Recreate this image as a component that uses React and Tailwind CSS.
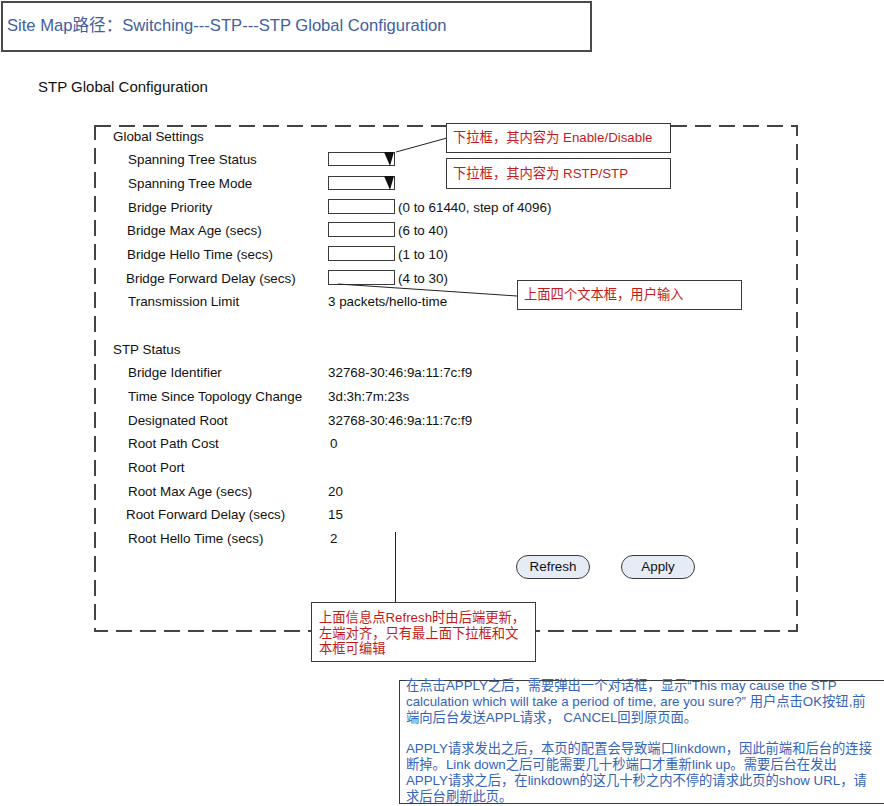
import React from "react";

function SelectBox() {
  return (
    <div className="relative mb-[2px] h-[14px] w-[67px] border border-[#3a3a3a] bg-white">
      <svg className="absolute right-[-1px] top-[-1px]" width="12" height="14" viewBox="0 0 12 14">
        <polygon points="1,0 11,0 7,14" fill="#111" />
      </svg>
    </div>
  );
}

function TextBox() {
  return <div className="mb-[3px] h-[15px] w-[67px] border border-[#3a3a3a] bg-white" />;
}

function Row({ label, lcls, children }) {
  return (
    <div className="flex h-[23.67px] items-center text-[13.4px] text-[#111]">
      <div className={"w-[234px] shrink-0 whitespace-nowrap " + lcls}>{label}</div>
      <div className="flex items-center whitespace-nowrap">{children}</div>
    </div>
  );
}

export default function App() {
  return (
    <div className="relative h-[806px] w-[884px] overflow-hidden bg-white font-['Liberation_Sans','Noto_Sans_CJK_SC',sans-serif] text-[#111]">
      {/* header */}
      <div className="ml-[1px] mt-[1px] flex h-[51px] w-[591px] items-center border-2 border-[#4a4a4a] pl-[4px] text-[16.6px] text-[#40609e]">
        <span className="whitespace-nowrap">Site Map路径：Switching---STP---STP Global Configuration</span>
      </div>

      <div className="ml-[38px] mt-[26px] h-[18px] text-[15px] leading-[18px]">STP Global Configuration</div>

      {/* dashed panel */}
      <div className="relative ml-[94px] mt-[29px] h-[507px] w-[704px]">
        <svg className="absolute inset-0" width="704" height="507" viewBox="0 0 704 507">
          <rect x="1" y="1" width="702" height="505" fill="none" stroke="#444" strokeWidth="2" strokeDasharray="16 8" />
        </svg>
        <div className="relative flex flex-col">
          <Row label="Global Settings" lcls="pl-[19px]" />
          <Row label="Spanning Tree Status" lcls="pl-[34px]"><SelectBox /></Row>
          <Row label="Spanning Tree Mode" lcls="pl-[34px]"><SelectBox /></Row>
          <Row label="Bridge Priority" lcls="pl-[34px]"><TextBox /><span className="ml-[3px]">(0 to 61440, step of 4096)</span></Row>
          <Row label="Bridge Max Age (secs)" lcls="pl-[33px]"><TextBox /><span className="ml-[3px]">(6 to 40)</span></Row>
          <Row label="Bridge Hello Time (secs)" lcls="pl-[33px]"><TextBox /><span className="ml-[3px]">(1 to 10)</span></Row>
          <Row label="Bridge Forward Delay (secs)" lcls="pl-[32px]"><TextBox /><span className="ml-[3px]">(4 to 30)</span></Row>
          <Row label="Transmission Limit" lcls="pl-[34px]">3 packets/hello-time</Row>
          <Row label="" lcls="" />
          <Row label="STP Status" lcls="pl-[19px]" />
          <Row label="Bridge Identifier" lcls="pl-[34px]">32768-30:46:9a:11:7c:f9</Row>
          <Row label="Time Since Topology Change" lcls="pl-[34px]">3d:3h:7m:23s</Row>
          <Row label="Designated Root" lcls="pl-[34px]">32768-30:46:9a:11:7c:f9</Row>
          <Row label="Root Path Cost" lcls="pl-[34px]"><span className="ml-[2px]">0</span></Row>
          <Row label="Root Port" lcls="pl-[34px]" />
          <Row label="Root Max Age (secs)" lcls="pl-[34px]">20</Row>
          <Row label="Root Forward Delay (secs)" lcls="pl-[32px]">15</Row>
          <Row label="Root Hello Time (secs)" lcls="pl-[34px]"><span className="ml-[2px]">2</span></Row>
          <div className="ml-[422px] mt-[4px] flex gap-[31px]">
            <div className="flex h-[24px] w-[74px] items-center justify-center rounded-full border-[1.5px] border-[#3a3a3a] bg-[#e6ecf6] text-[13.4px]">Refresh</div>
            <div className="flex h-[24px] w-[74px] items-center justify-center rounded-full border-[1.5px] border-[#3a3a3a] bg-[#e6ecf6] text-[13.4px]">Apply</div>
          </div>
        </div>
      </div>

      {/* bottom note */}
      <div className="ml-[399px] mt-[48px] h-[124px] w-[485px] border-[1.5px] border-r-0 border-[#3a3a3a] bg-white pl-[6px] text-[13.3px] leading-[15.8px] text-[#3563b8]">
        <div className="-mt-[3px] whitespace-nowrap">
          <div>在点击APPLY之后，需要弹出一个对话框，显示“This may cause the STP</div>
          <div>calculation which will take a period of time, are you sure?” 用户点击OK按钮,前</div>
          <div>端向后台发送APPL请求， CANCEL回到原页面。</div>
          <div className="h-[15.8px]" />
          <div>APPLY请求发出之后，本页的配置会导致端口linkdown，因此前端和后台的连接</div>
          <div>断掉。Link down之后可能需要几十秒端口才重新link up。需要后台在发出</div>
          <div>APPLY请求之后，在linkdown的这几十秒之内不停的请求此页的show URL，请</div>
          <div>求后台刷新此页。</div>
        </div>
      </div>

      {/* connector lines */}
      <svg className="pointer-events-none absolute inset-0" width="884" height="806" viewBox="0 0 884 806">
        <line x1="396" y1="152" x2="447" y2="138" stroke="#222" strokeWidth="1" />
        <line x1="338" y1="284" x2="517" y2="296" stroke="#222" strokeWidth="1" />
        <line x1="395.5" y1="532" x2="395.5" y2="602" stroke="#222" strokeWidth="1" />
      </svg>

      {/* callouts */}
      <div className="absolute left-[446px] top-[123px] flex h-[30px] w-[225px] items-center border-[1.5px] border-[#3a3a3a] bg-white pl-[6px] text-[13.3px] text-[#c41a1a]">
        <span className="whitespace-nowrap">下拉框，其内容为 Enable/Disable</span>
      </div>
      <div className="absolute left-[446px] top-[158px] flex h-[31px] w-[225px] items-center border-[1.5px] border-[#3a3a3a] bg-white pl-[6px] text-[13.3px] text-[#c41a1a]">
        <span className="whitespace-nowrap">下拉框，其内容为 RSTP/STP</span>
      </div>
      <div className="absolute left-[517px] top-[280px] flex h-[30px] w-[225px] items-center border-[1.5px] border-[#3a3a3a] bg-white pl-[6px] text-[13.3px] text-[#c41a1a]">
        <span className="whitespace-nowrap">上面四个文本框，用户输入</span>
      </div>
      <div className="absolute left-[311px] top-[602px] h-[60px] w-[225px] border-[1.5px] border-[#3a3a3a] bg-white pl-[7px] pt-[7px] text-[13.3px] leading-[15.5px] text-[#c41a1a]">
        <div className="whitespace-nowrap">上面信息点Refresh时由后端更新，</div>
        <div className="whitespace-nowrap">左端对齐，只有最上面下拉框和文</div>
        <div className="whitespace-nowrap">本框可编辑</div>
      </div>
    </div>
  );
}
